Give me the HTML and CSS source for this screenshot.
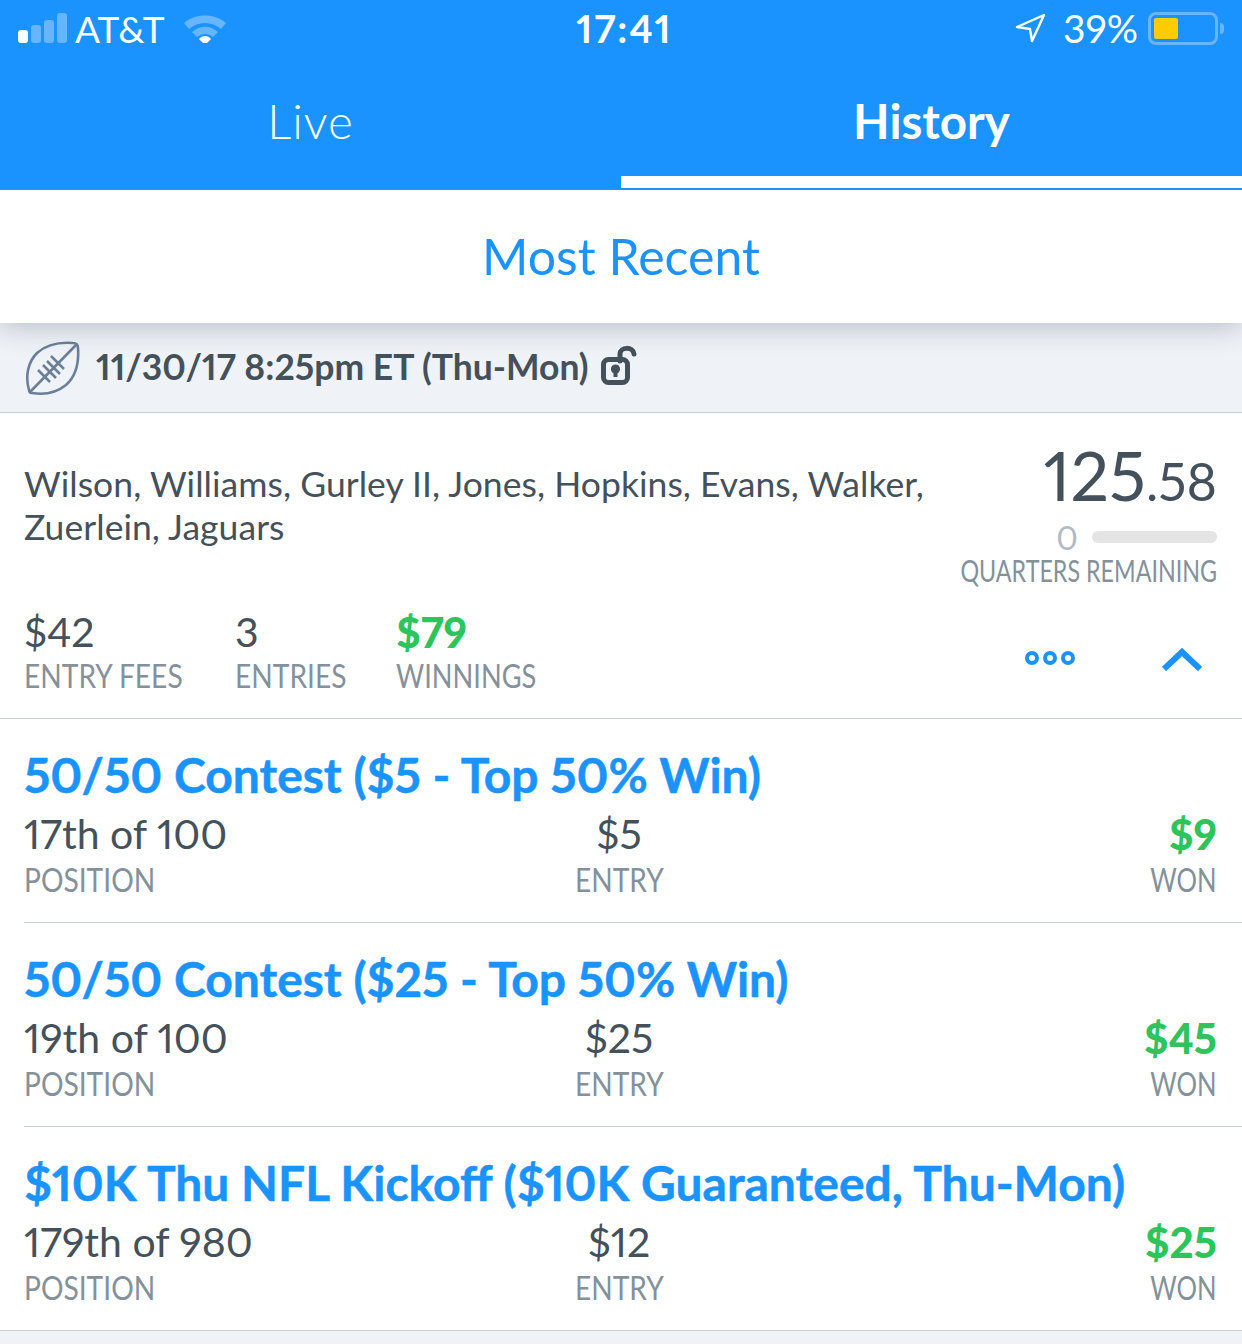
FILE: index.html
```html
<!DOCTYPE html>
<html lang="en">
<head>
  <meta charset="UTF-8" />
  <title>History</title>
  <link rel="stylesheet" href="styles.css">
</head>
<body>
  <div class="top">
    <div class="status-bar">
      <div class="status-left">
        <div class="signal"><i class="on"></i><i></i><i></i><i></i></div>
        <span class="carrier">AT&amp;T</span>
        <svg class="wifi" width="44" height="30" viewBox="0 0 44 30">
          <path d="M1 10 C12 0 32 0 43 10 L38 16 C29 8 15 8 6 16 Z" fill="#65b5ff"/>
          <path d="M9 19 C17 12 27 12 35 19 L30 24 C25 20 19 20 14 24 Z" fill="#65b5ff"/>
          <path d="M16 27 C19 23 25 23 28 27 L22 33 Z" fill="#fff" transform="translate(0 -1)"/>
        </svg>
      </div>
      <div class="clock">17:41</div>
      <div class="status-right">
        <svg class="arrow" width="32" height="32" viewBox="0 0 32 32">
          <path d="M2 15 L29 3 L17 29 L15 17 Z" fill="none" stroke="#fff" stroke-width="2.4" stroke-linejoin="round"/>
        </svg>
        <span class="percent">39%</span>
        <div class="battery"><div class="battery-level"></div></div>
        <div class="battery-tip"></div>
      </div>
    </div>
    <div class="tabs">
      <div class="tab live">Live</div>
      <div class="tab active">History</div>
    </div>
  </div>

  <div class="filter">Most Recent</div>

  <div class="date-bar">
    <svg class="ball" width="56" height="56" viewBox="0 0 56 56" fill="none" stroke="#6b7f99" stroke-width="2.6">
      <path d="M5 50 C1 36 4 22 13 13 C23 4 36 2 49 3 C53 3 54 5 54 8 C55 22 52 36 42 45 C32 53 20 55 8 53 C6 53 5 52 5 50 Z" stroke-linejoin="round"/>
      <path d="M6 52 L53 4"/>
      <path d="M19 25 L32 38 M23 21 L36 34 M27 16 L40 29 M14 30 L26 42"/>
    </svg>
    <span class="date-text">11/30/17 8:25pm ET (Thu-Mon)</span>
    <svg class="lock" width="36" height="42" viewBox="0 0 36 42">
      <path d="M19 17 V10 C19 3 32 2 33 10" fill="none" stroke="#44515b" stroke-width="5" stroke-linecap="round"/>
      <rect x="2.5" y="15.5" width="24" height="23" rx="5" fill="none" stroke="#44515b" stroke-width="5"/>
      <circle cx="14.5" cy="25" r="4.6" fill="#44515b"/>
      <rect x="12.5" y="26" width="4" height="7" fill="#44515b"/>
    </svg>
  </div>

  <div class="summary">
    <div class="summary-top">
      <div class="players">Wilson, Williams, Gurley II, Jones, Hopkins, Evans, Walker, Zuerlein, Jaguars</div>
      <div class="score-box">
        <div class="score">125<small>.58</small></div>
        <div class="quarters"><span class="q-num">0</span><div class="q-bar"></div></div>
        <div class="label">QUARTERS REMAINING</div>
      </div>
    </div>
    <div class="summary-bottom">
      <div class="stat fees"><div class="value">$42</div><div class="label">ENTRY FEES</div></div>
      <div class="stat entries"><div class="value">3</div><div class="label">ENTRIES</div></div>
      <div class="stat winnings"><div class="value green">$79</div><div class="label">WINNINGS</div></div>
      <div class="dots"><i></i><i></i><i></i></div>
      <svg class="chevron" width="40" height="24" viewBox="0 0 40 24">
        <path d="M2 22 L20 5 L38 22" fill="none" stroke="#1a93fe" stroke-width="6"/>
      </svg>
    </div>
  </div>

  <div class="contest">
    <div class="contest-name">50/50 Contest ($5 - Top 50% Win)</div>
    <div class="contest-row">
      <div class="cell"><div class="value">17th of 100</div><div class="label">POSITION</div></div>
      <div class="cell mid"><div class="value">$5</div><div class="label">ENTRY</div></div>
      <div class="cell end"><div class="value green">$9</div><div class="label">WON</div></div>
    </div>
  </div>
  <div class="contest">
    <div class="contest-name">50/50 Contest ($25 - Top 50% Win)</div>
    <div class="contest-row">
      <div class="cell"><div class="value">19th of 100</div><div class="label">POSITION</div></div>
      <div class="cell mid"><div class="value">$25</div><div class="label">ENTRY</div></div>
      <div class="cell end"><div class="value green">$45</div><div class="label">WON</div></div>
    </div>
  </div>
  <div class="contest last">
    <div class="contest-name">$10K Thu NFL Kickoff ($10K Guaranteed, Thu-Mon)</div>
    <div class="contest-row">
      <div class="cell"><div class="value">179th of 980</div><div class="label">POSITION</div></div>
      <div class="cell mid"><div class="value">$12</div><div class="label">ENTRY</div></div>
      <div class="cell end"><div class="value green">$25</div><div class="label">WON</div></div>
    </div>
  </div>
  <div class="page-end"></div>
</body>
</html>
```

FILE: styles.css
```css
html, body { margin: 0; padding: 0; }
body {
  width: 1242px;
  height: 1344px;
  overflow: hidden;
  background: #fff;
  color: #44515b;
  font-family: Lato, "Open Sans", sans-serif;
  font-variant-numeric: proportional-nums;
}
.top { background: #1a93fe; height: 190px; color: #fff; }
.status-bar {
  height: 52px;
  padding-top: 2px;
  display: grid;
  grid-template-columns: 1fr auto 1fr;
  align-items: center;
  padding-left: 18px;
  padding-right: 18px;
  font-size: 37px;
}
.status-left, .status-right { display: flex; align-items: center; }
.status-right { justify-content: flex-end; }
.signal { display: flex; align-items: flex-end; gap: 3px; height: 30px; margin-right: 8px; }
.signal i { width: 10px; border-radius: 3px; background: #65b5ff; }
.signal i:nth-child(1) { height: 13px; background: #fff; }
.signal i:nth-child(2) { height: 18px; }
.signal i:nth-child(3) { height: 23px; }
.signal i:nth-child(4) { height: 30px; }
.carrier { margin-right: 18px; }
.clock { font-size: 39px; font-weight: 700; letter-spacing: 2px; margin-left: 7px; }
.arrow { margin-right: 16px; }
.percent { margin-right: 10px; font-size: 39px; }
.battery {
  width: 70px;
  height: 33px;
  box-sizing: border-box;
  border: 3px solid #65b5ff;
  border-radius: 8px;
  padding: 3px;
}
.battery-level { width: 24px; height: 21px; background: #ffcc00; border-radius: 2px; }
.battery-tip { width: 4px; height: 11px; background: #65b5ff; margin-left: 2px; border-radius: 0 4px 4px 0; }
.tabs { display: flex; height: 136px; }
.tab {
  flex: 1;
  box-sizing: border-box;
  text-align: center;
  font-size: 47.5px;
  font-weight: 300;
  line-height: 134px;
}
.tab.live { letter-spacing: 1px; }
.tab.active { font-weight: 700; border-bottom: 12px solid #fff; margin-bottom: 2px; }
.filter {
  height: 133px;
  line-height: 132px;
  text-align: center;
  color: #1a93fe;
  font-size: 50px;
  position: relative;
  box-shadow: 0 4px 26px rgba(40, 50, 70, 0.28);
  clip-path: inset(0 0 -50px 0);
}
.date-bar {
  height: 90px;
  box-sizing: border-box;
  background: #eff3f8;
  border-bottom: 1px solid #c4ccd3;
  display: flex;
  align-items: center;
  padding-left: 24px;
}
.ball { margin-right: 16px; }
.date-text { font-size: 35.5px; font-weight: 700; margin: 0 12px 3px 0; }
.lock { margin-bottom: 6px; }
.summary { height: 306px; box-sizing: border-box; border-bottom: 1px solid #c9d0d6; padding: 0 25px 0 24px; }
.summary-top { display: flex; justify-content: space-between; height: 175px; }
.players { width: 930px; font-size: 35.5px; letter-spacing: 0.05px; line-height: 43px; margin-top: 49px; }
.score-box { width: 260px; padding-top: 24px; text-align: right; }
.score { font-size: 68px; line-height: 76px; font-weight: 400; }
.score small { font-size: 52px; }
.quarters { display: flex; align-items: center; justify-content: flex-end; height: 38px; margin-top: -1px; }
.q-num { font-size: 33px; line-height: 33px; color: #afbcc6; margin-right: 14px; }
.q-bar { width: 125px; height: 12px; background: #e4e4e4; border-radius: 6px; }
/* no condensed Lato here, so the caps get squeezed */
.label {
  font-size: 32px;
  line-height: 36px;
  margin-top: 4px;
  color: #84919b;
  white-space: nowrap;
  transform: scaleX(0.88);
  transform-origin: left center;
}
.score-box .label {
  display: flex;
  justify-content: flex-end;
  font-size: 30px;
  line-height: 32px;
  margin-top: -2px;
  transform: scaleX(0.776);
  transform-origin: right center;
}
.summary-bottom .label { margin-top: 2px; }
.summary-bottom .winnings .label { transform: scaleX(0.85); }
.summary-bottom { display: flex; align-items: flex-start; position: relative; padding-top: 20px; }
.value { font-size: 41px; line-height: 48px; }
.green { color: #2ec45c; font-size: 42px; font-weight: 900; }
.fees { width: 211px; }
.entries { width: 161px; }
.dots { position: absolute; left: 1001px; top: 63px; display: flex; gap: 4px; }
.dots i { width: 6px; height: 6px; border: 4px solid #1a93fe; border-radius: 50%; }
.chevron { position: absolute; left: 1138px; top: 59px; }
.contest { height: 204px; box-sizing: border-box; margin-left: 24px; border-bottom: 1px solid #c9d0d6; padding-right: 25px; padding-top: 27px; }
.contest.last { margin-left: 0; padding-left: 24px; }
.contest-name { font-size: 48px; line-height: 58px; font-weight: 700; color: #1a93fe; white-space: nowrap; -webkit-text-stroke: 0.5px #1a93fe; }
.contest-row { display: grid; grid-template-columns: 1fr 1fr 1fr; margin-top: 6px; }
.mid { text-align: center; margin-left: -3px; }
.mid .label { transform-origin: center; }
.end { text-align: right; }
.end .label { transform: scaleX(0.8); transform-origin: right center; }
.page-end { height: 20px; background: #eff3f8; }
```
